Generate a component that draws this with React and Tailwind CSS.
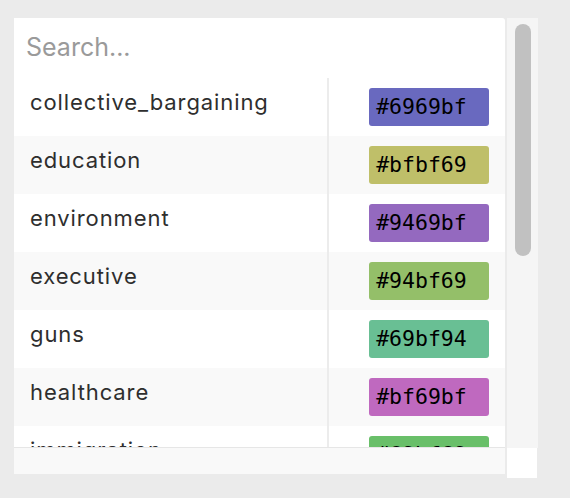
const rows = [
  { name: "collective_bargaining", color: "#6969bf" },
  { name: "education", color: "#bfbf69" },
  { name: "environment", color: "#9469bf" },
  { name: "executive", color: "#94bf69" },
  { name: "guns", color: "#69bf94" },
  { name: "healthcare", color: "#bf69bf" },
  { name: "immigration", color: "#69bf69" },
];

export default function App() {
  return (
    <div className="min-h-screen bg-[#ebebeb] pt-[18px] pl-[14px]">
      <div className="flex w-[524px]">
        {/* main column */}
        <div className="w-[493px]">
          <div className="h-[60px] bg-white rounded-tr-[3px] flex items-center pl-[12px]">
            <input
              placeholder="Search..."
              className="w-full bg-transparent outline-none text-[25px] text-[#333] placeholder-[#9a9a9a] font-['Inter',sans-serif]"
            />
          </div>
          <div className="h-[370px] overflow-hidden border-b border-[#e6e6e6]">
            {rows.map((row, i) => (
              <div
                key={row.name}
                className={`flex h-[58px] ${i % 2 ? "bg-[#f9f9f9]" : "bg-white"}`}
              >
                <div className="w-[315px] border-r-2 border-[#ececec] pl-[16px] pt-[10px] text-[22px] leading-[28px] tracking-[0.9px] text-[#2e2e2e] font-['Inter',sans-serif]">
                  {row.name}
                </div>
                <div className="flex-1 flex justify-end items-center pr-[16px]">
                  <div
                    className="w-[120px] h-[38px] rounded-[3px] pl-[7px] flex items-center text-[21.5px] text-black font-['DejaVu_Sans_Mono',monospace]"
                    style={{ backgroundColor: row.color }}
                  >
                    {row.color}
                  </div>
                </div>
              </div>
            ))}
          </div>
          <div className="h-[26px] bg-[#f9f9f9]" />
        </div>
        {/* vertical scrollbar */}
        <div className="w-[31px] ml-[2px] flex flex-col">
          <div className="h-[430px] bg-[#f5f5f5] pt-[6px] flex justify-center">
            <div className="w-[16px] h-[232px] rounded-full bg-[#c1c1c1]" />
          </div>
          <div className="h-[30px] bg-white w-[30px]" />
        </div>
      </div>
    </div>
  );
}
